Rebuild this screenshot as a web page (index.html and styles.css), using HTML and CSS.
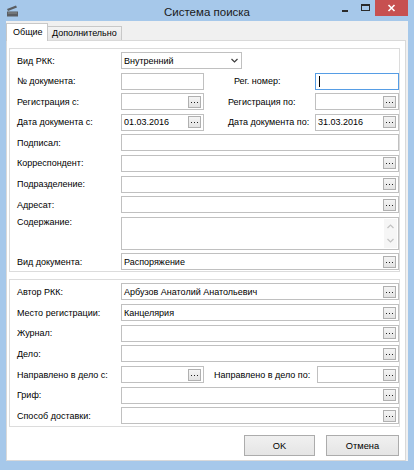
FILE: index.html
```html
<!DOCTYPE html>
<html lang="ru">
<head>
<meta charset="utf-8">
<title>Система поиска</title>
<link rel="stylesheet" href="styles.css">
</head>
<body>
<div class="window">
  <div class="titlebar">
    <div class="tb-left">
      <svg class="app-icon" width="12" height="12" viewBox="0 0 12 12">
        <polygon points="0,4 9,0.5 10,2.5 1,6" fill="#5b5e62"/>
        <rect x="0" y="6.5" width="11" height="5" fill="#5b5e62"/>
        <rect x="1" y="7.5" width="9" height="1" fill="#8a8d90"/>
      </svg>
    </div>
    <div class="title">Система поиска</div>
    <div class="controls">
      <div class="ctl"><svg width="19" height="16"><rect x="5" y="10" width="6" height="2" fill="#2b2b2b"/></svg></div>
      <div class="ctl"><svg width="19" height="16"><rect x="5.5" y="4.5" width="8" height="6" fill="none" stroke="#2b2b2b"/><rect x="5" y="4" width="9" height="2" fill="#2b2b2b"/></svg></div>
      <div class="ctl close"><svg width="33" height="16"><path d="M13.5 5 L19.5 11 M19.5 5 L13.5 11" stroke="#fff" stroke-width="1.6"/></svg></div>
    </div>
  </div>

  <div class="client">
    <div class="tabs">
      <div class="tab active">Общие</div>
      <div class="tab">Дополнительно</div>
    </div>
    <div class="page">
      <div class="group first">
        <div class="row">
          <div class="label">Вид РКК:</div>
          <div class="field combo">Внутренний<svg class="chev" width="7" height="5"><polyline points="0.5,1 3.5,4 6.5,1" fill="none" stroke="#3c3c3c" stroke-width="1.2"/></svg></div>
        </div>
        <div class="row">
          <div class="label">№ документа:</div>
          <div class="field short"></div>
          <div class="label2 ml30">Рег. номер:</div>
          <div class="field right focused"><span class="caret"></span></div>
        </div>
        <div class="row">
          <div class="label">Регистрация с:</div>
          <div class="field short"><span class="dots"></span></div>
          <div class="label2 ml24">Регистрация по:</div>
          <div class="field right"><span class="dots"></span></div>
        </div>
        <div class="row">
          <div class="label">Дата документа с:</div>
          <div class="field short">01.03.2016<span class="dots"></span></div>
          <div class="label2 ml24">Дата документа по:</div>
          <div class="field right">31.03.2016<span class="dots"></span></div>
        </div>
        <div class="row">
          <div class="label">Подписал:</div>
          <div class="field"></div>
        </div>
        <div class="row">
          <div class="label">Корреспондент:</div>
          <div class="field"><span class="dots"></span></div>
        </div>
        <div class="row">
          <div class="label">Подразделение:</div>
          <div class="field"><span class="dots"></span></div>
        </div>
        <div class="row">
          <div class="label">Адресат:</div>
          <div class="field"><span class="dots"></span></div>
        </div>
        <div class="row tall">
          <div class="label top">Содержание:</div>
          <div class="field area">
            <div class="vscroll">
              <svg width="7" height="5"><polyline points="0.5,4 3.5,1 6.5,4" fill="none" stroke="#c2c2c2" stroke-width="1.2"/></svg>
              <svg width="7" height="5"><polyline points="0.5,1 3.5,4 6.5,1" fill="none" stroke="#c2c2c2" stroke-width="1.2"/></svg>
            </div>
          </div>
        </div>
        <div class="row">
          <div class="label">Вид документа:</div>
          <div class="field">Распоряжение<span class="dots"></span></div>
        </div>
      </div>

      <div class="group second">
        <div class="row">
          <div class="label">Автор РКК:</div>
          <div class="field">Арбузов Анатолий Анатольевич<span class="dots"></span></div>
        </div>
        <div class="row">
          <div class="label">Место регистрации:</div>
          <div class="field">Канцелярия<span class="dots"></span></div>
        </div>
        <div class="row">
          <div class="label">Журнал:</div>
          <div class="field"><span class="dots"></span></div>
        </div>
        <div class="row">
          <div class="label">Дело:</div>
          <div class="field"><span class="dots"></span></div>
        </div>
        <div class="row">
          <div class="label">Направлено в дело с:</div>
          <div class="field short"><span class="dots"></span></div>
          <div class="label2 ml10">Направлено в дело по:</div>
          <div class="field right narrow"><span class="dots"></span></div>
        </div>
        <div class="row">
          <div class="label">Гриф:</div>
          <div class="field"><span class="dots"></span></div>
        </div>
        <div class="row">
          <div class="label">Способ доставки:</div>
          <div class="field"><span class="dots"></span></div>
        </div>
      </div>

      <div class="actions">
        <button class="btn ok">OK</button>
        <button class="btn cancel">Отмена</button>
      </div>
    </div>
  </div>
</div>
</body>
</html>
```

FILE: styles.css
```css
* { box-sizing: border-box; }
html, body { margin: 0; padding: 0; }
body {
  width: 414px;
  height: 470px;
  overflow: hidden;
  background: #a6c8ea;
  font-family: "Liberation Sans", Arial, sans-serif;
  font-size: 9px;
  color: #000;
}
.window {
  width: 414px;
  height: 470px;
  display: flex;
  flex-direction: column;
}
.titlebar {
  height: 21px;
  flex: none;
  display: grid;
  grid-template-columns: 1fr auto 1fr;
  align-items: start;
}
.app-icon { display: block; margin: 5px 0 0 7px; }
.title {
  font-size: 11.5px;
  line-height: 16px;
  margin-top: 4px;
  color: #1a1a1a;
}
.controls {
  justify-self: end;
  display: flex;
  margin-right: 6px;
}
.ctl { width: 19px; height: 16px; }
.ctl svg { display: block; }
.ctl.close { width: 33px; background: #c75050; }

.client {
  flex: 1;
  margin: 0 6px 9px 6px;
  background: #f0f0f0;
  display: flex;
  flex-direction: column;
}
.tabs {
  height: 19px;
  flex: none;
  display: flex;
  align-items: flex-end;
}
.tab {
  height: 14px;
  line-height: 12px;
  padding: 0 4px;
  border: 1px solid #c8c8c8;
  border-left: none;
  border-bottom: none;
  background: linear-gradient(#f3f3f3, #e6e6e6);
  white-space: nowrap;
}
.tab.active {
  position: relative;
  z-index: 1;
  height: 18px;
  line-height: 16px;
  width: 42px;
  padding: 0 0 0 6px;
  border-left: 1px solid #c8c8c8;
  background: #fff;
  margin-bottom: -1px;
}
.page {
  flex: 1;
  background: #fff;
  border: 1px solid #d9d9d9;
  margin-right: 2px;
  display: flex;
  flex-direction: column;
}
.group {
  margin: 7px 5px 0 2px;
  border: 1px solid #dcdcdc;
  padding: 3px 0 1px 7px;
  display: flex;
  flex-direction: column;
  gap: 3.6px;
}
.group.second {
  margin-top: 7px;
  padding-bottom: 2px;
  gap: 3.7px;
}
.row {
  display: flex;
  align-items: center;
  height: 17px;
}
.row.tall { height: 33px; align-items: stretch; }
.label {
  width: 104px;
  flex: none;
  white-space: nowrap;
  line-height: 12px;
}
.label.top { align-self: flex-start; line-height: 11px; }
.label2 { white-space: nowrap; line-height: 12px; }
.ml30 { margin-left: 30px; }
.ml24 { margin-left: 24px; }
.ml10 { margin-left: 10px; }
.field {
  flex: 1;
  height: 17px;
  border: 1px solid #c0c0c0;
  background: #fff;
  display: flex;
  align-items: center;
  padding-left: 2px;
  white-space: nowrap;
  min-width: 0;
}
.row.tall .field { height: 33px; }
.field.short { flex: none; width: 83px; }
.field.right { flex: none; width: 84px; margin-left: auto; }
.field.right.narrow { width: 82px; }
.field.combo { flex: none; width: 121px; }
.field.focused { border-color: #569de5; }
.caret {
  width: 1px;
  height: 11px;
  background: #000;
  margin-left: 1px;
}
.chev { margin-left: auto; margin-right: 3px; display: block; }
.dots {
  margin-left: auto;
  margin-right: 2px;
  width: 13px;
  height: 12px;
  flex: none;
  border: 1px solid #b0b0b0;
  background: linear-gradient(#f4f4f4, #e3e3e3);
  display: flex;
  align-items: center;
  justify-content: center;
}
.dots::before {
  content: "";
  width: 1px;
  height: 1px;
  margin-top: 1px;
  background: #222;
  box-shadow: 3px 0 #222, -3px 0 #222;
}
.field.area { align-items: stretch; padding: 1px; }
.vscroll {
  margin-left: auto;
  width: 13px;
  background: #f6f6f6;
  display: flex;
  flex-direction: column;
  justify-content: space-between;
  align-items: center;
  padding: 5px 0 5px;
}
.vscroll svg { display: block; }
.actions {
  display: flex;
  justify-content: flex-end;
  gap: 11px;
  margin: 8px 6px 0 0;
}
.btn {
  height: 21px;
  padding: 0;
  border: 1px solid #acacac;
  background: linear-gradient(#f0f0f0, #e5e5e5);
  font-family: inherit;
  font-size: 9.3px;
  color: #000;
}
.btn.ok { width: 71px; }
.btn.cancel { width: 73px; }
```
